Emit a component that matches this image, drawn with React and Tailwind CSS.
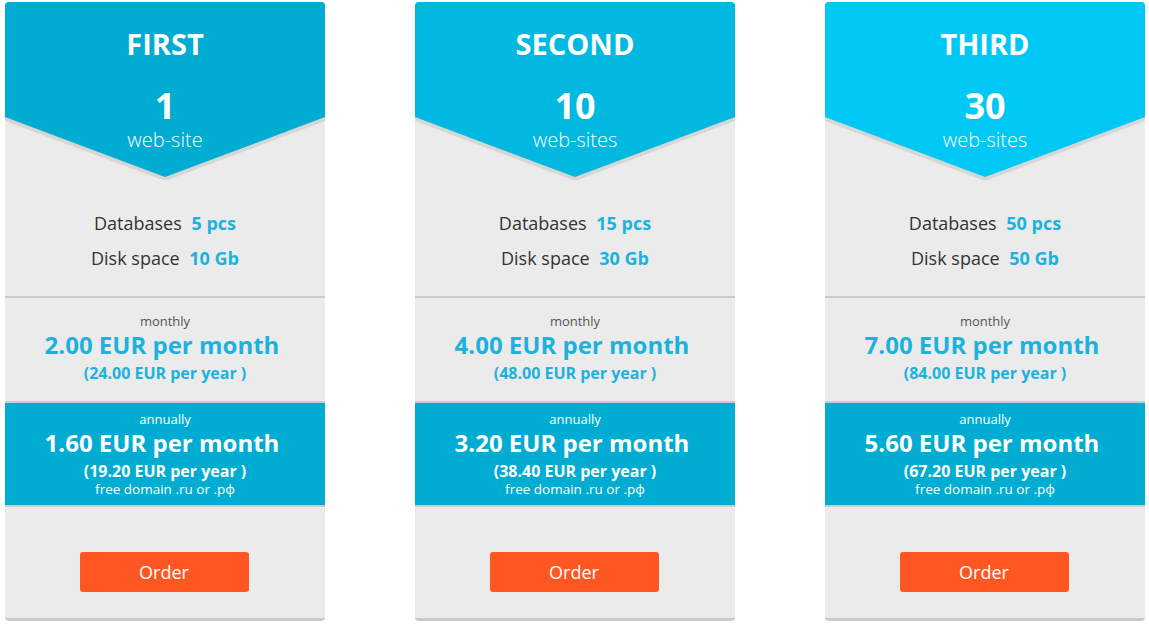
import React from "react";

const plans = [
  { name: "FIRST", count: "1", unit: "web-site", head: "#00acd1", db: "5 pcs", disk: "10 Gb", m: "2.00", my: "24.00", a: "1.60", ay: "19.20" },
  { name: "SECOND", count: "10", unit: "web-sites", head: "#00b8e0", db: "15 pcs", disk: "30 Gb", m: "4.00", my: "48.00", a: "3.20", ay: "38.40" },
  { name: "THIRD", count: "30", unit: "web-sites", head: "#00c8f4", db: "50 pcs", disk: "50 Gb", m: "7.00", my: "84.00", a: "5.60", ay: "67.20" },
];

function Card({ p }) {
  return (
    <div className="w-[320px] flex flex-col bg-[#ebebeb] rounded-[4px] border-b-[3px] border-[#cbcbcb] overflow-hidden">
      <div className="relative h-[178px]">
        <svg className="absolute inset-0" width="320" height="178" viewBox="0 0 320 178" preserveAspectRatio="none">
          <polygon points="0,0 320,0 320,119 160,179 0,119" fill="#d6d6d6" />
          <polygon points="0,0 320,0 320,115 160,175 0,115" fill={p.head} />
        </svg>
        <div className="relative flex flex-col items-center text-white pt-[24px]">
          <div className="text-[29px] leading-[36px] font-bold">{p.name}</div>
          <div className="mt-[22px] text-[36px] leading-[44px] font-bold">{p.count}</div>
          <div className="text-[20px] leading-[24px] font-light">{p.unit}</div>
        </div>
      </div>
      <div className="h-[116px] pt-[26px] flex flex-col items-center text-[18px] text-[#333]">
        <div className="leading-[35px]">
          Databases <span className="ml-[5px] font-bold text-[#1cb2de]">{p.db}</span>
        </div>
        <div className="leading-[35px]">
          Disk space <span className="ml-[5px] font-bold text-[#1cb2de]">{p.disk}</span>
        </div>
      </div>
      <div className="h-[2px] bg-[#cbcbcb]" />
      <div className="h-[103px] pt-[14px] flex flex-col items-center">
        <div className="text-[13px] leading-[18px] text-[#555]">monthly</div>
        <div className="pr-[6px] text-[24px] leading-[30px] font-bold text-[#1cb2de]">{p.m} EUR per month</div>
        <div className="mt-[2px] text-[16px] leading-[22px] font-bold text-[#1cb2de]">({p.my} EUR per year )</div>
      </div>
      <div className="h-[2px] bg-[#cbcbcb]" />
      <div className="h-[102px] bg-[#00acd1] pt-[7px] flex flex-col items-center text-white">
        <div className="text-[13px] leading-[18px]">annually</div>
        <div className="pr-[6px] text-[24px] leading-[30px] font-bold">{p.a} EUR per month</div>
        <div className="mt-[3px] text-[16px] leading-[20px] font-bold">({p.ay} EUR per year )</div>
        <div className="text-[13.5px] leading-[16px]">free domain .ru or .рф</div>
      </div>
      <div className="h-[2px] bg-[#cbcbcb]" />
      <div className="h-[111px] pt-[45px] flex justify-center">
        <button className="mr-[2px] w-[169px] h-[40px] rounded-[3px] bg-[#ff5722] text-white text-[18px]">Order</button>
      </div>
    </div>
  );
}

export default function App() {
  return (
    <div className="w-[1149px] h-[626px] bg-white pt-[2px] pl-[5px] flex gap-[90px] items-start" style={{ fontFamily: '"Open Sans", "Noto Sans", sans-serif' }}>
      {plans.map((p) => (
        <Card key={p.name} p={p} />
      ))}
    </div>
  );
}
